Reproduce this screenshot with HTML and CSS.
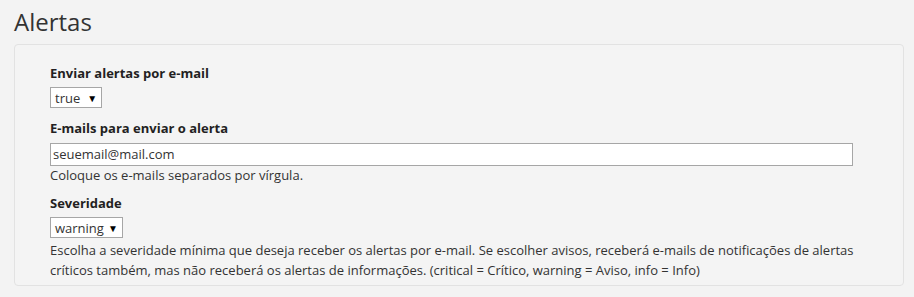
FILE: index.html
```html
<!DOCTYPE html>
<html lang="pt">
<head>
<meta charset="utf-8">
<title>Alertas</title>
<link rel="stylesheet" href="styles.css">
</head>
<body>
<h1 class="page-title">Alertas</h1>
<div class="panel">
  <div class="field">
    <label class="field-label">Enviar alertas por e-mail</label>
    <div class="select select-bool"><span class="select-value">true</span><span class="select-arrow">▼</span></div>
  </div>
  <div class="field field-emails">
    <label class="field-label">E-mails para enviar o alerta</label>
    <div class="text-input">seuemail@mail.com</div>
    <p class="help">Coloque os e-mails separados por vírgula.</p>
  </div>
  <div class="field field-severity">
    <label class="field-label">Severidade</label>
    <div class="select"><span class="select-value">warning</span><span class="select-arrow">▼</span></div>
    <p class="help help-long">Escolha a severidade mínima que deseja receber os alertas por e-mail. Se escolher avisos, receberá e-mails de notificações de alertas críticos também, mas não receberá os alertas de informações. (critical = Crítico, warning = Aviso, info = Info)</p>
  </div>
</div>
</body>
</html>
```

FILE: styles.css
```css
html, body {
  margin: 0;
  padding: 0;
  background: #f3f3f3;
}
body {
  font-family: "Open Sans", "Noto Sans", sans-serif;
  color: #333;
  font-size: 13px;
}
.page-title {
  margin: 0 0 6px 14px;
  padding-top: 5px;
  font-size: 24px;
  font-weight: 400;
  line-height: normal;
  color: #333;
}
.panel {
  margin-left: 14px;
  width: 853px;
  height: 221px;
  padding: 19px 0 0 35px;
  border: 1px solid #e2e2e2;
  border-radius: 4px;
  background: #f4f4f4;
  box-sizing: content-box;
}
.field {
  display: flex;
  flex-direction: column;
  align-items: flex-start;
}
.field-emails {
  margin-top: 11px;
}
.field-severity {
  margin-top: 10px;
}
.field-label {
  display: block;
  font-weight: 700;
  line-height: 18px;
  color: #231f22;
}
.select {
  margin-top: 5px;
  height: 21px;
  box-sizing: border-box;
  border: 1px solid #a6a6a6;
  background: #fff;
  display: flex;
  align-items: center;
  padding: 0 4px 0 4px;
  line-height: 18px;
  color: #333;
}
.select-arrow {
  font-size: 10px;
  margin-left: 4px;
  color: #000;
}
.select-bool .select-arrow {
  margin-left: 7px;
}
.text-input {
  margin-top: 6px;
  width: 803px;
  height: 23px;
  box-sizing: border-box;
  border: 1px solid #a6a6a6;
  background: #fff;
  padding: 0 2px;
  line-height: 21px;
  color: #333;
}
.help {
  margin: 0;
  line-height: 18px;
  color: #333;
}
.help-long {
  line-height: 20px;
  margin-top: 2px;
  width: 820px;
}
```
